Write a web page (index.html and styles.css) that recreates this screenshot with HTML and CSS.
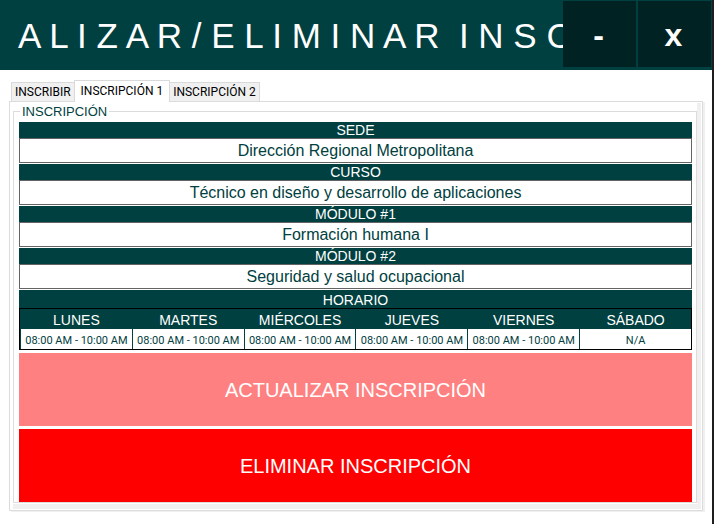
FILE: index.html
```html
<!DOCTYPE html>
<html lang="es">
<head>
<meta charset="utf-8">
<meta name="viewport" content="width=device-width, initial-scale=1">
<title>Inscripción</title>
<link rel="stylesheet" href="styles.css">
</head>
<body>
<header class="titlebar">
  <h1 class="title">A L I Z A R / E L I M I N A R  I N S C R I P C I Ó N</h1>
  <div class="window-buttons">
    <button type="button" class="window-button">-</button>
    <button type="button" class="window-button">x</button>
  </div>
</header>
<main class="content">
  <nav class="tabs">
    <button type="button" class="tab">INSCRIBIR</button>
    <button type="button" class="tab tab-active">INSCRIPCIÓN 1</button>
    <button type="button" class="tab">INSCRIPCIÓN 2</button>
  </nav>
  <section class="panel">
    <div class="panel-inner">
    <fieldset class="group">
      <legend class="legend">INSCRIPCIÓN</legend>
      <div class="field">
        <label class="bar" for="sede">SEDE</label>
        <input class="value" id="sede" type="text" readonly value="Dirección Regional Metropolitana">
      </div>
      <div class="field">
        <label class="bar" for="curso">CURSO</label>
        <input class="value" id="curso" type="text" readonly value="Técnico en diseño y desarrollo de aplicaciones">
      </div>
      <div class="field">
        <label class="bar" for="modulo1">MÓDULO #1</label>
        <input class="value" id="modulo1" type="text" readonly value="Formación humana I">
      </div>
      <div class="field">
        <label class="bar" for="modulo2">MÓDULO #2</label>
        <input class="value" id="modulo2" type="text" readonly value="Seguridad y salud ocupacional">
      </div>
      <table class="schedule">
        <caption class="bar">HORARIO</caption>
        <thead>
          <tr><th>LUNES</th><th>MARTES</th><th>MIÉRCOLES</th><th>JUEVES</th><th>VIERNES</th><th>SÁBADO</th></tr>
        </thead>
        <tbody>
          <tr><td>08:00 AM - 10:00 AM</td><td>08:00 AM - 10:00 AM</td><td>08:00 AM - 10:00 AM</td><td>08:00 AM - 10:00 AM</td><td>08:00 AM - 10:00 AM</td><td>N/A</td></tr>
        </tbody>
      </table>
      <div class="actions">
        <button type="button" class="action action-update">ACTUALIZAR INSCRIPCIÓN</button>
        <button type="button" class="action action-delete">ELIMINAR INSCRIPCIÓN</button>
      </div>
    </fieldset>
    </div>
  </section>
</main>
</body>
</html>
```
FILE: styles.css
```css
* {
  box-sizing: border-box;
}

body {
  margin: 0;
  min-height: 100vh;
  border-right: 2px solid #1e1e1e;
  background: #fff;
  color: #004040;
  font-family: "Liberation Sans", Arial, sans-serif;
}

button,
input {
  margin: 0;
  border: 0;
  border-radius: 0;
  font-family: inherit;
}

.titlebar {
  display: flex;
  height: 70px;
  background: #004040;
  color: #fff;
}

.title {
  flex: 1;
  min-width: 0;
  margin: 0;
  padding-left: 18px;
  overflow: hidden;
  white-space: pre;
  font-size: 35px;
  font-weight: 400;
  line-height: 72px;
}

.window-buttons {
  display: flex;
  gap: 2px;
  padding: 1px 1px 3px 0;
}

.window-button {
  width: 73px;
  padding: 2px 2px 0 0;
  background: #002222;
  color: #fff;
  font-size: 32px;
  font-weight: 700;
  line-height: 64px;
}

.content {
  padding: 10px 9px 12px 9px;
}

.tabs {
  display: flex;
  align-items: flex-end;
  height: 21px;
  padding-left: 2px;
}

.tab {
  height: 19px;
  padding: 0 3px;
  border: 1px solid #d9d9d9;
  border-bottom: 0;
  background: #f0f0f0;
  color: #000;
  font-family: Roboto, "Liberation Sans", sans-serif;
  font-size: 12px;
  line-height: 18px;
}

.tab-active {
  z-index: 1;
  height: 22px;
  margin: 0 -1px -1px;
  padding: 0 6px 2px;
  background: #fff;
}

.panel {
  border: 1px solid #dcdcdc;
  box-shadow: 2px 1px 0 #f0f0f0;
  padding: 1px 1px 1px 3px;
}

.panel-inner {
  border: solid #f0f0f0;
  border-width: 0 4px 5px 0;
  padding: 1px 0;
}

.group {
  min-width: 0;
  margin: 0;
  padding: 3px 4px 0 5px;
  border: 1px solid #dcdcdc;
}

.legend {
  margin-left: 1px;
  padding: 0 2px;
  font-size: 13px;
  line-height: 15px;
}

.field {
  margin-bottom: 1px;
}

.bar {
  display: block;
  background: #004040;
  color: #fff;
  font-size: 14px;
  line-height: 16px;
  text-align: center;
}

.value {
  display: block;
  width: 100%;
  height: 25px;
  padding: 0;
  border: 1px solid #646464;
  background: #fff;
  color: #004040;
  font-size: 16px;
  text-align: center;
}

.schedule {
  width: 100%;
  table-layout: fixed;
  border-spacing: 0;
  border: 1px solid #000;
}

.schedule .bar {
  display: table-caption;
  padding: 2px 0 0;
}

.schedule th,
.schedule td {
  height: 20px;
  padding: 0;
  border-left: 1px solid #004040;
  text-align: center;
  white-space: nowrap;
}

.schedule th {
  padding-top: 2px;
  background: #004040;
  color: #fff;
  font-size: 14px;
  font-weight: 400;
  line-height: 18px;
}

.schedule td {
  padding-top: 4px;
  font-family: Roboto, "Liberation Sans", sans-serif;
  font-size: 11px;
  line-height: 16px;
}

.actions {
  display: flex;
  flex-direction: column;
  gap: 3px;
  padding-top: 3px;
}

.action {
  height: 73px;
  padding: 2px 0 0;
  color: #fff;
  font-size: 20px;
}

.action-update {
  background: #ff8080;
}

.action-delete {
  background: #f00;
}
```
